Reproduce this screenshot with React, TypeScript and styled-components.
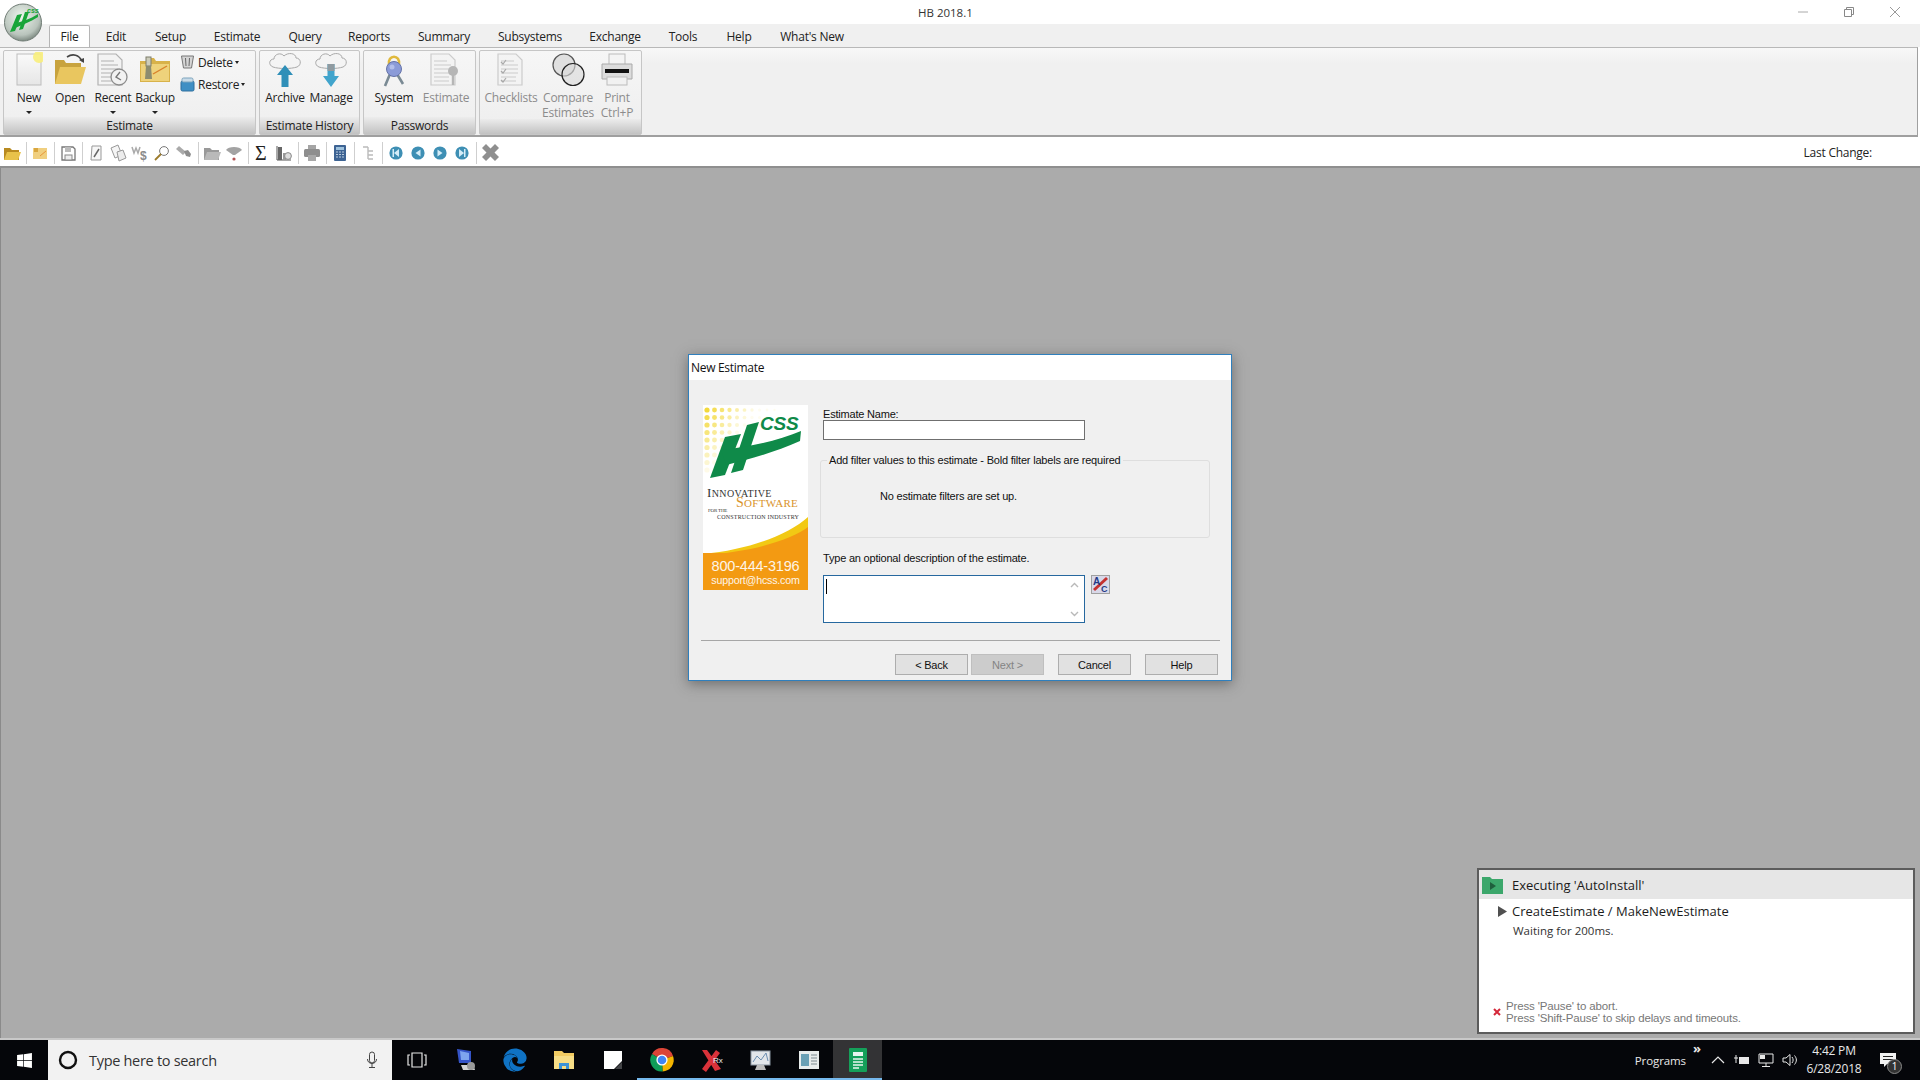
import React from "react";
import styled, { createGlobalStyle } from "styled-components";
import { FaEdge, FaWindows } from "react-icons/fa";

const ui = `"Open Sans", "Noto Sans", sans-serif`;
const classic = `"Liberation Sans", Arial, sans-serif`;

const Global = createGlobalStyle`
  html, body { margin: 0; padding: 0; overflow: hidden; background: #ababab; }
  * { box-sizing: border-box; }
`;

const Page = styled.div`
  position: relative; width: 1920px; height: 1080px; display: flex; flex-direction: column;
  font-family: ${ui}; color: #1c1c1c; background: #fff;
`;
const TitleBar = styled.header`
  height: 24px; background: #fff; display: flex; align-items: center; justify-content: space-between;
  padding-left: 918px; font-size: 11.5px; color: #333;
`;
const WinControls = styled.div`display: flex; padding-right: 2px;`;
const WinButton = styled.div`width: 46px; height: 24px; display: flex; align-items: center; justify-content: center;`;
const AppOrb = styled.div`position: absolute; left: 4px; top: 3px; width: 38px; height: 39px; z-index: 3;`;

const MenuStrip = styled.nav`
  height: 23px; background: #f0f0f0; display: flex; align-items: flex-end; padding-left: 49px; font-size: 12px;
`;
const MenuTab = styled.div<{ $active?: boolean; $w: number }>`
  width: ${p => p.$w}px; height: 22px; display: flex; align-items: center; justify-content: center;
  letter-spacing: -0.25px; color: #222;
  ${p => p.$active && `background:#fff;border:1px solid #b5b5b5;border-bottom:none;border-radius:2px 2px 0 0;`}
`;

const RibbonPanel = styled.section`
  height: 90px; flex-shrink: 0; margin-right: 2px; background: #f0f0f0; display: flex; gap: 3px; padding: 2px 0 0 3px;
  border-top: 1px solid #b8b8b8; border-right: 1px solid #a0a0a0; border-bottom: 2px solid #9f9f9f;
  background-image: linear-gradient(#f8f8f8 0, #f0f0f0 16px);
`;
const Group = styled.div<{ $w: number }>`
  width: ${p => p.$w}px; display: flex; flex-direction: column; border: 1px solid #c6c6c6; border-radius: 2px;
  background: linear-gradient(#f6f6f6, #eeeeee);
`;
const GroupBody = styled.div<{ $pad: number }>`height: 68px; display: flex; padding-left: ${p => p.$pad}px;`;
const GroupFoot = styled.div`
  flex: 1; display: flex; align-items: center; justify-content: center; font-size: 12px; letter-spacing: -0.25px; color: #222;
  background: linear-gradient(#ececec, #c2c2c2);
`;
const BigButton = styled.div<{ $w: number; $off?: boolean }>`
  width: ${p => p.$w}px; display: flex; flex-direction: column; align-items: center; padding-top: 1px; flex-shrink: 0;
  font-size: 12px; line-height: 15px; letter-spacing: -0.25px; text-align: center; color: ${p => (p.$off ? "#8c8c8c" : "#222")};
`;
const BigIcon = styled.div<{ $off?: boolean }>`
  height: 35px; display: flex; align-items: center; justify-content: center; margin-bottom: 3px;
  opacity: ${p => (p.$off ? 0.6 : 1)};
`;
const DropCaret = styled.i`
  display: block; width: 0; height: 0; margin-top: 6px; border: 3px solid transparent; border-top: 3px solid #222; border-bottom: 0;
`;
const SmallStack = styled.div`display: flex; flex-direction: column; gap: 2px; padding: 1px 0 0 4px;`;
const SmallItem = styled.div`
  height: 20px; display: flex; align-items: center; gap: 3px; font-size: 12px; letter-spacing: -0.25px; color: #222;
`;
const SmallCaret = styled.i`
  display: block; width: 0; height: 0; margin-left: -1px; border: 2.5px solid transparent; border-top: 3px solid #222; border-bottom: 0;
`;

const ToolBar = styled.div`
  height: 29px; flex-shrink: 0; margin-top: 2px; background: #fff; display: flex; align-items: center; padding: 0 0 0 1px; font-size: 12px;
  border-bottom: 2px solid #8f8f8f;
`;
const ToolIcon = styled.div`
  width: 22px; height: 22px; display: flex; align-items: center; justify-content: center; flex-shrink: 0;
`;
const ToolSep = styled.i`width: 1px; height: 22px; margin: 0 2.5px; background: #cfcfcf; flex-shrink: 0;`;
const LastChange = styled.div`margin-left: auto; padding-right: 48px; letter-spacing: -0.25px; color: #222;`;

const Workspace = styled.main`
  position: relative; flex: 1; background: #ababab; border-left: 1px solid #8a8a8a;
`;

const Dialog = styled.div`
  position: absolute; left: 687px; top: 186px; width: 544px; height: 327px; display: flex; flex-direction: column;
  border: 1px solid #2f7fbd; background: #f0f0f0; box-shadow: 0 3px 12px rgba(60, 60, 60, .55);
  font-family: ${classic}; font-size: 11px; letter-spacing: -0.2px; color: #111;
`;
const DialogTitle = styled.div`
  height: 25px; background: #fff; display: flex; align-items: center; padding-left: 2px; font-family: ${ui}; font-size: 12px; letter-spacing: -0.3px;
`;
const DialogBody = styled.div`display: flex; gap: 15px; padding: 23px 0 0 14px; height: 260px;`;
const LogoBox = styled.div`width: 105px; height: 185px; flex-shrink: 0; margin-top: 2px;`;
const FormCol = styled.div`width: 390px; display: flex; flex-direction: column; align-items: flex-start;`;
const FieldLabel = styled.label`display: block; height: 13px; line-height: 14px; margin-top: 4px;`;
const NameInput = styled.div`width: 262px; height: 20px; background: #fff; border: 1px solid #6f6f6f;`;
const FilterSet = styled.fieldset`
  width: 390px; height: 85px; flex-shrink: 0; margin: 13px 0 0 -3px; padding: 0; border: 1px solid #dedede; border-radius: 3px;
  & > legend { margin-left: 6px; padding: 0 2px; line-height: 14px; }
`;
const NoFilters = styled.p`margin: 22px 0 0 59px; line-height: 14px;`;
const DescLabel = styled.label`display: block; margin-top: 13px; line-height: 14px;`;
const DescRow = styled.div`display: flex; gap: 6px; margin-top: 10px; align-items: flex-start;`;
const DescBox = styled.div`
  width: 262px; height: 48px; background: #fff; border: 1px solid #26689f; display: flex; justify-content: space-between; padding: 3px 3px 3px 2px;
`;
const Caret = styled.i`display: block; width: 1px; height: 15px; background: #000;`;
const ScrollTrack = styled.div`width: 13px; display: flex; flex-direction: column; justify-content: space-between; align-items: center; padding: 3px 0 2px;`;
const Divider = styled.hr`margin: 0 11px 0 12px; border: 0; border-top: 1px solid #a6a6a6;`;
const Actions = styled.div`display: flex; justify-content: flex-end; gap: 14px; padding: 13px 13px 0 0;`;
const BackNext = styled.div`display: flex; gap: 3px;`;
const DlgButton = styled.div<{ $off?: boolean }>`
  width: 73px; height: 21px; display: flex; align-items: center; justify-content: center; font-size: 11px;
  background: ${p => (p.$off ? "#cccccc" : "#e1e1e1")}; border: 1px solid ${p => (p.$off ? "#bfbfbf" : "#adadad")};
  color: ${p => (p.$off ? "#848484" : "#111")};
`;

const Runner = styled.aside`
  position: absolute; left: 1476px; top: 700px; width: 438px; height: 166px; background: #fff; border: 2px solid #5c5c5c;
  display: flex; flex-direction: column;
`;
const RunnerHead = styled.div`
  height: 29px; background: #e6e6e6; display: flex; align-items: center; gap: 9px; padding-left: 3px; font-size: 13px; color: #1a1a1a;
`;
const RunnerStep = styled.div`display: flex; align-items: center; gap: 5px; padding: 2px 0 0 19px; font-size: 13px; line-height: 20px;`;
const RunnerWait = styled.div`padding: 0 0 0 34px; font-size: 11.5px; line-height: 19px; color: #333;`;
const RunnerHint = styled.div`
  margin-top: auto; padding: 0 0 8px 14px; display: flex; align-items: center; gap: 5px; font-family: ${classic};
  font-size: 11.5px; letter-spacing: -0.14px; line-height: 12px; color: #777;
`;

const TopStripe = styled.div`height: 2px; flex-shrink: 0; background: #c8c8c8;`;
const Taskbar = styled.footer`
  height: 40px; flex-shrink: 0; background: #05060a; display: flex; align-items: stretch; color: #e8e8e8;
`;
const StartCell = styled.div`width: 48px; display: flex; align-items: center; justify-content: center; color: #fff;`;
const SearchBox = styled.div`
  width: 344px; background: #f2f2f2; display: flex; align-items: center; padding: 0 14px 0 10px; gap: 11px; font-size: 14.5px; color: #333;
`;
const SearchText = styled.span`flex: 1; letter-spacing: -0.3px;`;
const TaskCell = styled.div<{ $run?: boolean; $active?: boolean }>`
  width: 49px; display: flex; align-items: center; justify-content: center; flex-shrink: 0;
  background: ${p => (p.$active ? "#333335" : "transparent")};
  ${p => p.$run && `box-shadow: inset 0 -2px 0 #76b9ed, inset 4px 0 0 #05060a, inset -4px 0 0 #05060a;`}
  ${p => p.$active && `box-shadow: inset 0 -2px 0 #76b9ed;`}
`;
const Tray = styled.div`margin-left: auto; display: flex; align-items: center;`;
const TrayLabel = styled.span`font-size: 11.5px; letter-spacing: -0.1px; margin-right: 7px; margin-top: 1px;`;
const Chevrons = styled.span`font-size: 13px; font-weight: 700; align-self: flex-start; margin: 1px 5px 0 0; line-height: 14px;`;
const TrayIcon = styled.div<{ $w: number }>`width: ${p => p.$w}px; display: flex; justify-content: center; align-items: center;`;
const Clock = styled.div`width: 64px; margin: 0 2px 0 0; text-align: center; line-height: 18px; font-size: 12px; letter-spacing: -0.2px;`;
const ActionCenter = styled.div`
  position: relative; width: 40px; height: 40px; display: flex; align-items: center; justify-content: center; margin-right: 12px;
`;
const Badge = styled.span`
  position: absolute; right: 6px; bottom: 6px; width: 15px; height: 15px; border-radius: 50%; background: #333; border: 1px solid #888;
  font-size: 10px; line-height: 13px; text-align: center; color: #fff;
`;

const Sv = ({ w, h = w, vb, children }: { w: number; h?: number; vb?: string; children: React.ReactNode }) => (
  <svg width={w} height={h} viewBox={vb ?? `0 0 ${w} ${h}`} aria-hidden="true">{children}</svg>
);

const Orb = () => (
  <Sv w={38} h={39}>
    <defs>
      <radialGradient id="orb" cx="45%" cy="35%" r="70%"><stop offset="0" stopColor="#eef5ee" /><stop offset="0.7" stopColor="#b9c4bc" /><stop offset="1" stopColor="#6d7a72" /></radialGradient>
    </defs>
    <circle cx="19" cy="19.5" r="18.5" fill="url(#orb)" stroke="#6f7b74" />
    <path d="M6 29 L13 12 L18 11 L11 28 Z M15 27 L19 26 L25 9 L21 9 Z" fill="#19a539" />
    <path d="M10 20 C18 19 26 16 34 11 L34 14 C26 19 18 22 11 25 Z" fill="#19a539" />
    <text x="23" y="10" fontSize="7" fontWeight="700" fontStyle="italic" fill="#19a539" fontFamily="Liberation Sans">css</text>
  </Sv>
);

const NewIcon = () => (
  <Sv w={28} h={35}>
    <defs><linearGradient id="pg" x1="0" y1="0" x2="0" y2="1"><stop offset="0" stopColor="#fafafa" /><stop offset="1" stopColor="#e6e6e6" /></linearGradient></defs>
    <rect x="2" y="2" width="24" height="31" fill="url(#pg)" stroke="#bdbdbd" />
    <circle cx="24" cy="5" r="6" fill="#f8ee7c" opacity=".9" />
  </Sv>
);
const OpenIcon = () => (
  <Sv w={34} h={35}>
    <path d="M2 8 L11 8 L13 11 L28 11 L28 32 L2 32 Z" fill="#c8a33e" />
    <path d="M2 32 L7 15 L33 15 L28 32 Z" fill="#e9c65f" />
    <path d="M14 5 C20 1 26 3 29 9" fill="none" stroke="#444" strokeWidth="1.6" />
    <path d="M26 8 L31 11 L31 6 Z" fill="#444" />
  </Sv>
);
const DocLines = ({ w = 28 }: { w?: number }) => (
  <g fill="none" stroke="#b2b2b2" strokeWidth="1.2">
    <path d={`M2 2 H${w - 8} L${w - 2} 8 V33 H2 Z`} fill="#f3f3f3" />
    <path d={`M5 9 H${w - 10} M5 13 H${w - 6} M5 17 H${w - 6} M5 21 H${w - 6} M5 25 H${w - 8} M5 29 H${w - 8}`} />
  </g>
);
const RecentIcon = () => (
  <Sv w={34} h={35}>
    <DocLines />
    <circle cx="23" cy="25" r="8" fill="#f2f2f2" stroke="#8c8c8c" strokeWidth="1.3" />
    <path d="M24 20 L20 25 L25 28" fill="none" stroke="#777" strokeWidth="1.4" />
  </Sv>
);
const BackupIcon = () => (
  <Sv w={34} h={35}>
    <path d="M2 9 H8 L10 6 H16 L18 9 H32 V30 H2 Z" fill="#d8b24a" />
    <rect x="3" y="12" width="28" height="17" fill="#eed27b" />
    <path d="M15 22 L29 14" stroke="#d9822b" strokeWidth="1.4" />
    <rect x="8" y="5" width="5" height="9" fill="#ccb" stroke="#7d7d6b" />
    <path d="M8 14 H13 L14 27 H7 Z" fill="#8c8c6f" />
  </Sv>
);
const TrashIcon = () => (
  <Sv w={15} h={14}>
    <path d="M1.5 1 H13.5 L11.5 13 H3.5 Z" fill="#d4d4d4" stroke="#777" />
    <path d="M5.5 3 L6 11 M9.5 3 L9 11" stroke="#666" />
  </Sv>
);
const RestoreIcon = () => (
  <Sv w={15} h={15}>
    <rect x="1" y="4" width="13" height="10" rx="1.5" fill="#3f8fc4" stroke="#2f6f9e" />
    <rect x="2" y="1" width="11" height="4" rx="1.5" fill="#c8dbe8" stroke="#7da4bd" />
  </Sv>
);
const Cloud = () => (
  <path d="M6 20 C1 18 2 12 7 12 C7 7 14 5 17 9 C21 5 29 6 29 11 C34 11 35 18 30 20 C24 22 12 22 6 20 Z" fill="#f4f4f4" stroke="#a9a9a9" />
);
const CloudUp = () => (
  <Sv w={36} h={35}>
    <g transform="translate(0 -5)"><Cloud /></g>
    <path d="M18 13 L26 23 H21.5 L21.5 35 H14.5 V23 H10 Z" fill="#2f8fb8" />
  </Sv>
);
const CloudDown = () => (
  <Sv w={36} h={35}>
    <g transform="translate(0 -5)"><Cloud /></g>
    <path d="M14.5 12 H21.5 V24 H26 L18 35 L10 24 H14.5 Z" fill="#41a4cc" />
    <path d="M14.5 12 H21.5 V19 H14.5 Z" fill="#8f9aa0" />
  </Sv>
);
const KeysIcon = () => (
  <Sv w={26} h={35}>
    <path d="M8 13 C6 2 20 2 18 13" fill="none" stroke="#e0b93c" strokeWidth="2.6" />
    <path d="M9 22 L4 34 M16 22 L22 32" stroke="#7a8a94" strokeWidth="2.6" />
    <circle cx="13" cy="17" r="7.5" fill="#8b9bd8" stroke="#6573a8" />
    <circle cx="11" cy="15" r="2.5" fill="#b3bfea" />
  </Sv>
);
const KeyDocIcon = () => (
  <Sv w={34} h={35}>
    <DocLines />
    <circle cx="24" cy="19" r="5" fill="#8e8e8e" />
    <path d="M24 23 V33" stroke="#8e8e8e" strokeWidth="2.4" />
  </Sv>
);
const CheckIcon = () => (
  <Sv w={30} h={35}>
    <DocLines />
    <path d="M5 10 l2 2 l3 -4 M5 19 l2 2 l3 -4 M5 28 l2 2 l3 -4" fill="none" stroke="#777" strokeWidth="1.2" />
  </Sv>
);
const CompareIcon = () => (
  <Sv w={34} h={35}>
    <circle cx="13" cy="13" r="11" fill="#e0e0e0" stroke="#555" strokeWidth="1.2" />
    <circle cx="22" cy="22.5" r="11" fill="#d8d8d8" fillOpacity=".6" stroke="#222" strokeWidth="1.2" />
  </Sv>
);
const PrinterIcon = () => (
  <Sv w={34} h={35}>
    <rect x="9" y="2" width="16" height="12" fill="#f4f4f4" stroke="#bbb" />
    <path d="M2 12 H32 V27 H2 Z" fill="#dcdcdc" stroke="#aaa" />
    <rect x="5" y="17" width="24" height="4" fill="#111" />
    <rect x="7" y="25" width="20" height="8" fill="#f1f1f1" stroke="#bbb" />
  </Sv>
);

const MiniFolder = ({ c = "#e8c24a", d = "#b88a20" }: { c?: string; d?: string }) => (
  <Sv w={18} h={18}>
    <path d="M1 4 H7 L9 6 H16 V16 H1 Z" fill={d} />
    <path d="M1 16 L4 8 H18 L15 16 Z" fill={c} />
  </Sv>
);
const toolIcons: React.ReactNode[] = [
  <MiniFolder />,
  null,
  <Sv w={16}><rect x="1" y="3" width="14" height="11" fill="#f0cf7f" /><path d="M2 7 H6 V3 H2 Z" fill="#d9a63f" /><path d="M8 11 L14 6" stroke="#e8953a" /></Sv>,
  null,
  <Sv w={16}><path d="M2 2 H13 L15 4 V15 H2 Z" fill="#fff" stroke="#777" strokeWidth="1.3" /><rect x="5" y="2" width="6" height="5" fill="#bbb" /><rect x="5" y="10" width="7" height="5" fill="#eee" stroke="#888" /></Sv>,
  null,
  <Sv w={16}><path d="M4 1 H13 V15 H3 Z" fill="#f7f7f7" stroke="#999" /><path d="M6 12 L11 4" stroke="#666" strokeWidth="1.5" /></Sv>,
  <Sv w={18}><path d="M2 4 L9 1 L13 11 L6 14 Z" fill="#f5f5f5" stroke="#999" /><path d="M8 8 L14 6 L17 14 L10 17 Z" fill="#ececec" stroke="#999" /></Sv>,
  <Sv w={18}><path d="M1 3 L3 9 L5 4 L7 9 L9 3" fill="none" stroke="#aaa" strokeWidth="1.5" /><text x="9" y="16" fontSize="12" fontWeight="700" fill="#8a8a8a" fontFamily="Liberation Sans">$</text></Sv>,
  <Sv w={16}><circle cx="10" cy="6" r="4.4" fill="#fff" stroke="#777" /><path d="M7 9 L1 15" stroke="#9c7b2a" strokeWidth="1.8" /></Sv>,
  <Sv w={18}><path d="M1 5 L4 2 L11 8 L8 11 Z" fill="#aaa" /><path d="M9 7 L13 6 L16 10 L15 13 L11 12 Z" fill="#8d8d8d" /></Sv>,
  null,
  <MiniFolder c="#b9b9b9" d="#999" />,
  <Sv w={18}><path d="M1 6 C3 2 15 2 17 6 L10 11 L8 11 Z" fill="#a3a3a3" /><circle cx="9" cy="15" r="1.6" fill="#b25555" /></Sv>,
  null,
  <Sv w={16} h={20}><text x="1" y="17" fontSize="20" fill="#222" fontFamily="Liberation Serif">Σ</text></Sv>,
  <Sv w={18}><path d="M2 2 V16 H16" fill="none" stroke="#555" /><rect x="3" y="3" width="4" height="13" fill="#666" /><rect x="8" y="9" width="3" height="7" fill="#999" /><circle cx="13" cy="12" r="3.4" fill="#ddd" stroke="#888" /></Sv>,
  null,
  <Sv w={18}><rect x="5" y="1" width="8" height="5" fill="#a5a5a5" /><rect x="1" y="5" width="16" height="8" rx="1.5" fill="#8e8e8e" /><rect x="5" y="11" width="8" height="6" fill="#a8a8a8" /></Sv>,
  null,
  <Sv w={14} h={18}><rect x="1" y="1" width="12" height="16" rx="1" fill="#3d6393" /><rect x="3" y="3" width="8" height="3" fill="#9ec2dd" /><path d="M3 8 H11 M3 10.5 H11 M3 13 H11" stroke="#bcd" strokeDasharray="2 1" /></Sv>,
  null,
  <Sv w={14} h={18}><path d="M2 3 H7 M7 3 V15 M7 7 H12 M7 11 H12 M7 15 H12" fill="none" stroke="#bbb" strokeWidth="1.4" /></Sv>,
  null,
];
const NavDot = ({ d }: { d: string }) => (
  <Sv w={14}><circle cx="7" cy="7" r="6.6" fill="#3e8fb4" /><path d={d} fill="#d5edf8" /></Sv>
);

const ChevUp = () => <Sv w={9} h={6}><path d="M1 5 L4.5 1.5 L8 5" fill="none" stroke="#b9b9b9" strokeWidth="1.4" /></Sv>;
const ChevDown = () => <Sv w={9} h={6}><path d="M1 1 L4.5 4.5 L8 1" fill="none" stroke="#b9b9b9" strokeWidth="1.4" /></Sv>;

const Logo = () => {
  const dots: React.ReactNode[] = [];
  for (let r = 0; r < 9; r++) for (let c = 0; c < 10 - r; c++) {
    const o = Math.max(0.08, 1 - (c * 0.14 + r * 0.11));
    dots.push(<circle key={`${r}-${c}`} cx={4 + c * 7.5} cy={5 + r * 7.5} r={2.6 - c * 0.15} fill="#f3d93c" opacity={o} />);
  }
  return (
    <svg width="105" height="185" viewBox="0 0 105 185" role="img" aria-label="HCSS">
      <rect width="105" height="185" fill="#fff" />
      {dots}
      <path d="M7 73 L22 32 L38 29 L22 70 Z" fill="#0f8a49" />
      <path d="M28 68 L40 65 L56 17 L44 20 Z" fill="#0f8a49" />
      <path d="M18 45 C45 42 75 36 98 26 L97 36 C72 47 45 55 23 60 Z" fill="#0f8a49" />
      <text x="57" y="25" fontFamily="Liberation Sans" fontSize="19" fontWeight="700" fontStyle="italic" fill="#0f8a49">CSS</text>
      <text x="4" y="92" fontFamily="Liberation Serif" fontSize="13" fill="#333" letterSpacing=".4">I<tspan fontSize="10">NNOVATIVE</tspan></text>
      <text x="33" y="102" fontFamily="Liberation Serif" fontSize="14" fill="#d9932b" letterSpacing=".3">S<tspan fontSize="11">OFTWARE</tspan></text>
      <text x="5" y="107" fontFamily="Liberation Serif" fontSize="5" fill="#333">FOR THE</text>
      <text x="14" y="114" fontFamily="Liberation Serif" fontSize="6" fill="#333" letterSpacing=".2">CONSTRUCTION INDUSTRY</text>
      <path d="M0 149 C45 145 85 130 105 112 V149 Z" fill="#f2c914" />
      <path d="M0 150 C50 147 90 134 105 122 V185 H0 Z" fill="#f39a12" />
      <rect y="148" width="105" height="37" fill="#f39a12" />
      <text x="52.5" y="166" textAnchor="middle" fontFamily="Liberation Sans" fontSize="14.5" fill="#fff" opacity=".9">800-444-3196</text>
      <text x="52.5" y="179" textAnchor="middle" fontFamily="Liberation Sans" fontSize="10.7" fill="#fff" opacity=".9">support@hcss.com</text>
    </svg>
  );
};

const Chrome = () => (
  <Sv w={24}>
    <path d="M12 12 L2 6 A11.5 11.5 0 0 1 23 8 Z" fill="#db4437" />
    <path d="M12 12 L12.5 23.5 A11.5 11.5 0 0 0 23 8 Z" fill="#f4b400" />
    <path d="M12 12 L2 6 A11.5 11.5 0 0 0 12.5 23.5 Z" fill="#0f9d58" />
    <circle cx="12" cy="12" r="5.6" fill="#fff" />
    <circle cx="12" cy="12" r="4.3" fill="#4285f4" />
  </Sv>
);

export default function App() {
  return (
    <Page>
      <Global />
      <TitleBar>
        <span>HB 2018.1</span>
        <WinControls>
          <WinButton><Sv w={12}><path d="M1 6 H11" stroke="#aaa" /></Sv></WinButton>
          <WinButton><Sv w={12}><path d="M1.5 3.5 H8.5 V10.5 H1.5 Z M3.5 3 V1.5 H10.5 V8.5 H9" fill="none" stroke="#888" /></Sv></WinButton>
          <WinButton><Sv w={12}><path d="M1 1 L11 11 M11 1 L1 11" stroke="#999" /></Sv></WinButton>
        </WinControls>
      </TitleBar>
      <AppOrb><Orb /></AppOrb>
      <MenuStrip>
        <MenuTab $active $w={41}>File</MenuTab>
        <MenuTab $w={52}>Edit</MenuTab>
        <MenuTab $w={57}>Setup</MenuTab>
        <MenuTab $w={76}>Estimate</MenuTab>
        <MenuTab $w={60}>Query</MenuTab>
        <MenuTab $w={68}>Reports</MenuTab>
        <MenuTab $w={82}>Summary</MenuTab>
        <MenuTab $w={90}>Subsystems</MenuTab>
        <MenuTab $w={80}>Exchange</MenuTab>
        <MenuTab $w={56}>Tools</MenuTab>
        <MenuTab $w={56}>Help</MenuTab>
        <MenuTab $w={90}>What's New</MenuTab>
      </MenuStrip>
      <RibbonPanel>
        <Group $w={253}>
          <GroupBody $pad={6}>
            <BigButton $w={38}><BigIcon><NewIcon /></BigIcon>New<DropCaret /></BigButton>
            <BigButton $w={44}><BigIcon><OpenIcon /></BigIcon>Open</BigButton>
            <BigButton $w={42}><BigIcon><RecentIcon /></BigIcon>Recent<DropCaret /></BigButton>
            <BigButton $w={42}><BigIcon><BackupIcon /></BigIcon>Backup<DropCaret /></BigButton>
            <SmallStack>
              <SmallItem><TrashIcon />Delete<SmallCaret /></SmallItem>
              <SmallItem><RestoreIcon />Restore<SmallCaret /></SmallItem>
            </SmallStack>
          </GroupBody>
          <GroupFoot>Estimate</GroupFoot>
        </Group>
        <Group $w={101}>
          <GroupBody $pad={2}>
            <BigButton $w={46}><BigIcon><CloudUp /></BigIcon>Archive</BigButton>
            <BigButton $w={46}><BigIcon><CloudDown /></BigIcon>Manage</BigButton>
          </GroupBody>
          <GroupFoot>Estimate History</GroupFoot>
        </Group>
        <Group $w={113}>
          <GroupBody $pad={6}>
            <BigButton $w={48}><BigIcon><KeysIcon /></BigIcon>System</BigButton>
            <BigButton $w={56} $off><BigIcon $off><KeyDocIcon /></BigIcon>Estimate</BigButton>
          </GroupBody>
          <GroupFoot>Passwords</GroupFoot>
        </Group>
        <Group $w={163}>
          <GroupBody $pad={2}>
            <BigButton $w={58} $off><BigIcon $off><CheckIcon /></BigIcon>Checklists</BigButton>
            <BigButton $w={56} $off><BigIcon><CompareIcon /></BigIcon>Compare Estimates</BigButton>
            <BigButton $w={42} $off><BigIcon><PrinterIcon /></BigIcon>Print Ctrl+P</BigButton>
          </GroupBody>
          <GroupFoot />
        </Group>
      </RibbonPanel>
      <ToolBar>
        {toolIcons.map((ic, i) => (ic ? <ToolIcon key={i}>{ic}</ToolIcon> : <ToolSep key={i} />))}
        <ToolIcon><NavDot d="M10 3 V11 L5 7 Z M3.5 3 H5 V11 H3.5 Z" /></ToolIcon>
        <ToolIcon><NavDot d="M9.5 3.5 V10.5 L4.5 7 Z" /></ToolIcon>
        <ToolIcon><NavDot d="M4.5 3.5 V10.5 L9.5 7 Z" /></ToolIcon>
        <ToolIcon><NavDot d="M4 3 V11 L9 7 Z M9 3 H10.5 V11 H9 Z" /></ToolIcon>
        <ToolSep />
        <ToolIcon><Sv w={19}><path d="M1 5 L5 1 L9.5 5.5 L14 1 L18 5 L13.5 9.5 L18 14 L14 18 L9.5 13.5 L5 18 L1 14 L5.5 9.5 Z" fill="#8f8f8f" /></Sv></ToolIcon>
        <LastChange>Last Change:</LastChange>
      </ToolBar>
      <Workspace>
        <Dialog>
          <DialogTitle>New Estimate</DialogTitle>
          <DialogBody>
            <LogoBox><Logo /></LogoBox>
            <FormCol>
              <FieldLabel>Estimate Name:</FieldLabel>
              <NameInput />
              <FilterSet>
                <legend>Add filter values to this estimate - Bold filter labels are required</legend>
                <NoFilters>No estimate filters are set up.</NoFilters>
              </FilterSet>
              <DescLabel>Type an optional description of the estimate.</DescLabel>
              <DescRow>
                <DescBox>
                  <Caret />
                  <ScrollTrack><ChevUp /><ChevDown /></ScrollTrack>
                </DescBox>
                <Sv w={19}>
                  <rect x=".5" y=".5" width="18" height="18" fill="#d8d8e8" stroke="#a0a0a0" />
                  <path d="M3 15 L16 3" stroke="#c4312f" strokeWidth="3" />
                  <text x="2" y="10" fontSize="10" fontWeight="700" fill="#243a86" fontFamily="Liberation Sans">A</text>
                  <text x="10" y="17" fontSize="9" fontWeight="700" fill="#243a86" fontFamily="Liberation Sans">C</text>
                </Sv>
              </DescRow>
            </FormCol>
          </DialogBody>
          <Divider />
          <Actions>
            <BackNext>
              <DlgButton>&lt; Back</DlgButton>
              <DlgButton $off>Next &gt;</DlgButton>
            </BackNext>
            <DlgButton>Cancel</DlgButton>
            <DlgButton>Help</DlgButton>
          </Actions>
        </Dialog>
        <Runner>
          <RunnerHead>
            <Sv w={21} h={19}><path d="M0 2 H8 L10 4 H21 V19 H0 Z" fill="#3ca76b" /><path d="M8 7 L14 11 L8 15 Z" fill="#1f5f3d" /></Sv>
            Executing 'AutoInstall'
          </RunnerHead>
          <RunnerStep>
            <Sv w={9} h={11}><path d="M0 0 L9 5.5 L0 11 Z" fill="#505050" /></Sv>
            CreateEstimate / MakeNewEstimate
          </RunnerStep>
          <RunnerWait>Waiting for 200ms.</RunnerWait>
          <RunnerHint>
            <Sv w={8}><path d="M1 1 L7 7 M7 1 L1 7" stroke="#d4283a" strokeWidth="2" /></Sv>
            <span>Press 'Pause' to abort.<br />Press 'Shift-Pause' to skip delays and timeouts.</span>
          </RunnerHint>
        </Runner>
      </Workspace>
      <TopStripe />
      <Taskbar>
        <StartCell><FaWindows size={17} /></StartCell>
        <SearchBox>
          <Sv w={20}><circle cx="10" cy="10" r="8" fill="none" stroke="#111" strokeWidth="2.4" /></Sv>
          <SearchText>Type here to search</SearchText>
          <Sv w={12} h={18}><rect x="3.5" y="1" width="5" height="11" rx="2.5" fill="none" stroke="#444" /><path d="M1.5 8 C1.5 14 10.5 14 10.5 8 M6 13 V16 M3 16.5 H9" fill="none" stroke="#444" /></Sv>
        </SearchBox>
        <TaskCell><Sv w={20} h={18}><path d="M5 2 H15 V16 H5 Z M3 4 H1 V14 H3 M17 4 H19 V14 H17" fill="none" stroke="#e8e8e8" strokeWidth="1.2" /></Sv></TaskCell>
        <TaskCell><Sv w={24}><path d="M3 1 L17 3 V15 L5 15 Z" fill="#3554c8" /><path d="M6 3 L15 5 V12 L7 12 Z" fill="#7ea4ee" /><path d="M7 17 H19 L21 22 H9 Z" fill="#d5d5d5" /><circle cx="17" cy="18" r="4" fill="#9a9a9a" /></Sv></TaskCell>
        <TaskCell><FaEdge size={24} color="#0f72c4" /></TaskCell>
        <TaskCell><Sv w={24}><path d="M2 3 H10 L12 5 H22 V21 H2 Z" fill="#f2cb62" /><rect x="2" y="8" width="20" height="13" fill="#f7dd86" /><path d="M7 21 V15 H17 V21 H14 V18 H10 V21 Z" fill="#3c93d8" /></Sv></TaskCell>
        <TaskCell><Sv w={20}><path d="M1 1 H19 V11 L11 19 H1 Z" fill="#fff" /><path d="M12 19 L19 12 V19 Z" fill="#fff" opacity=".25" /></Sv></TaskCell>
        <TaskCell $run><Chrome /></TaskCell>
        <TaskCell $run><Sv w={26} h={26}><path d="M4 3 L9 3 L23 22 L17 24 Z M18 3 L22 6 L8 25 L4 22 Z" fill="#d9323a" /><text x="15" y="16" fontSize="8" fill="#eee" fontFamily="Liberation Sans">Rx</text></Sv></TaskCell>
        <TaskCell $run><Sv w={24}><rect x="3" y="3" width="19" height="14" fill="#e2e6ea" stroke="#8c97a3" /><path d="M5 14 L9 8 L13 12 L18 5 L20 13" fill="none" stroke="#6a8db0" /><path d="M9 17 H16 L18 22 H7 Z" fill="#bcbcbc" /></Sv></TaskCell>
        <TaskCell $run><Sv w={22}><rect x="1" y="2" width="20" height="18" fill="#e8ecec" /><rect x="3" y="5" width="8" height="12" fill="#6aa0b5" /><path d="M13 6 H19 M13 9 H19 M13 12 H19 M13 15 H19" stroke="#7d8a90" /></Sv></TaskCell>
        <TaskCell $active><Sv w={22} h={26}><rect x="2" y="1" width="18" height="24" rx="1" fill="#15a05a" /><rect x="6" y="5" width="10" height="4" fill="#e8f5ee" /><path d="M6 12 H16 M6 15 H16 M6 18 H16 M6 21 H12" stroke="#e8f5ee" strokeWidth="1.6" /></Sv></TaskCell>
        <Tray>
          <TrayLabel>Programs</TrayLabel>
          <Chevrons>»</Chevrons>
          <TrayIcon $w={24}><Sv w={14} h={10}><path d="M1 8 L7 2 L13 8" fill="none" stroke="#e8e8e8" strokeWidth="1.2" /></Sv></TrayIcon>
          <TrayIcon $w={24}><Sv w={16} h={12}><rect x="5" y="3" width="10" height="7" fill="#e8e8e8" /><path d="M0 4 H4 M2 1 V9" stroke="#e8e8e8" /></Sv></TrayIcon>
          <TrayIcon $w={24}><Sv w={16}><path d="M1 2 H15 V11 H1 Z M8 11 V14 M4 14.5 H12" fill="none" stroke="#e8e8e8" /><rect x="2" y="3" width="5" height="4" fill="#e8e8e8" /></Sv></TrayIcon>
          <TrayIcon $w={24}><Sv w={16} h={14}><path d="M1 5 H4 L8 1.5 V12.5 L4 9 H1 Z M10 4 C11.5 6 11.5 8 10 10 M12.5 2.5 C15 5.5 15 8.5 12.5 11.5" fill="none" stroke="#e8e8e8" /></Sv></TrayIcon>
          <Clock>4:42 PM<br />6/28/2018</Clock>
          <ActionCenter>
            <Sv w={18} h={16}><path d="M1 1 H17 V12 H8 L5 15 V12 H1 Z" fill="#f2f2f2" /><path d="M4 4.5 H14 M4 7.5 H14" stroke="#222" /></Sv>
            <Badge>1</Badge>
          </ActionCenter>
        </Tray>
      </Taskbar>
    </Page>
  );
}
